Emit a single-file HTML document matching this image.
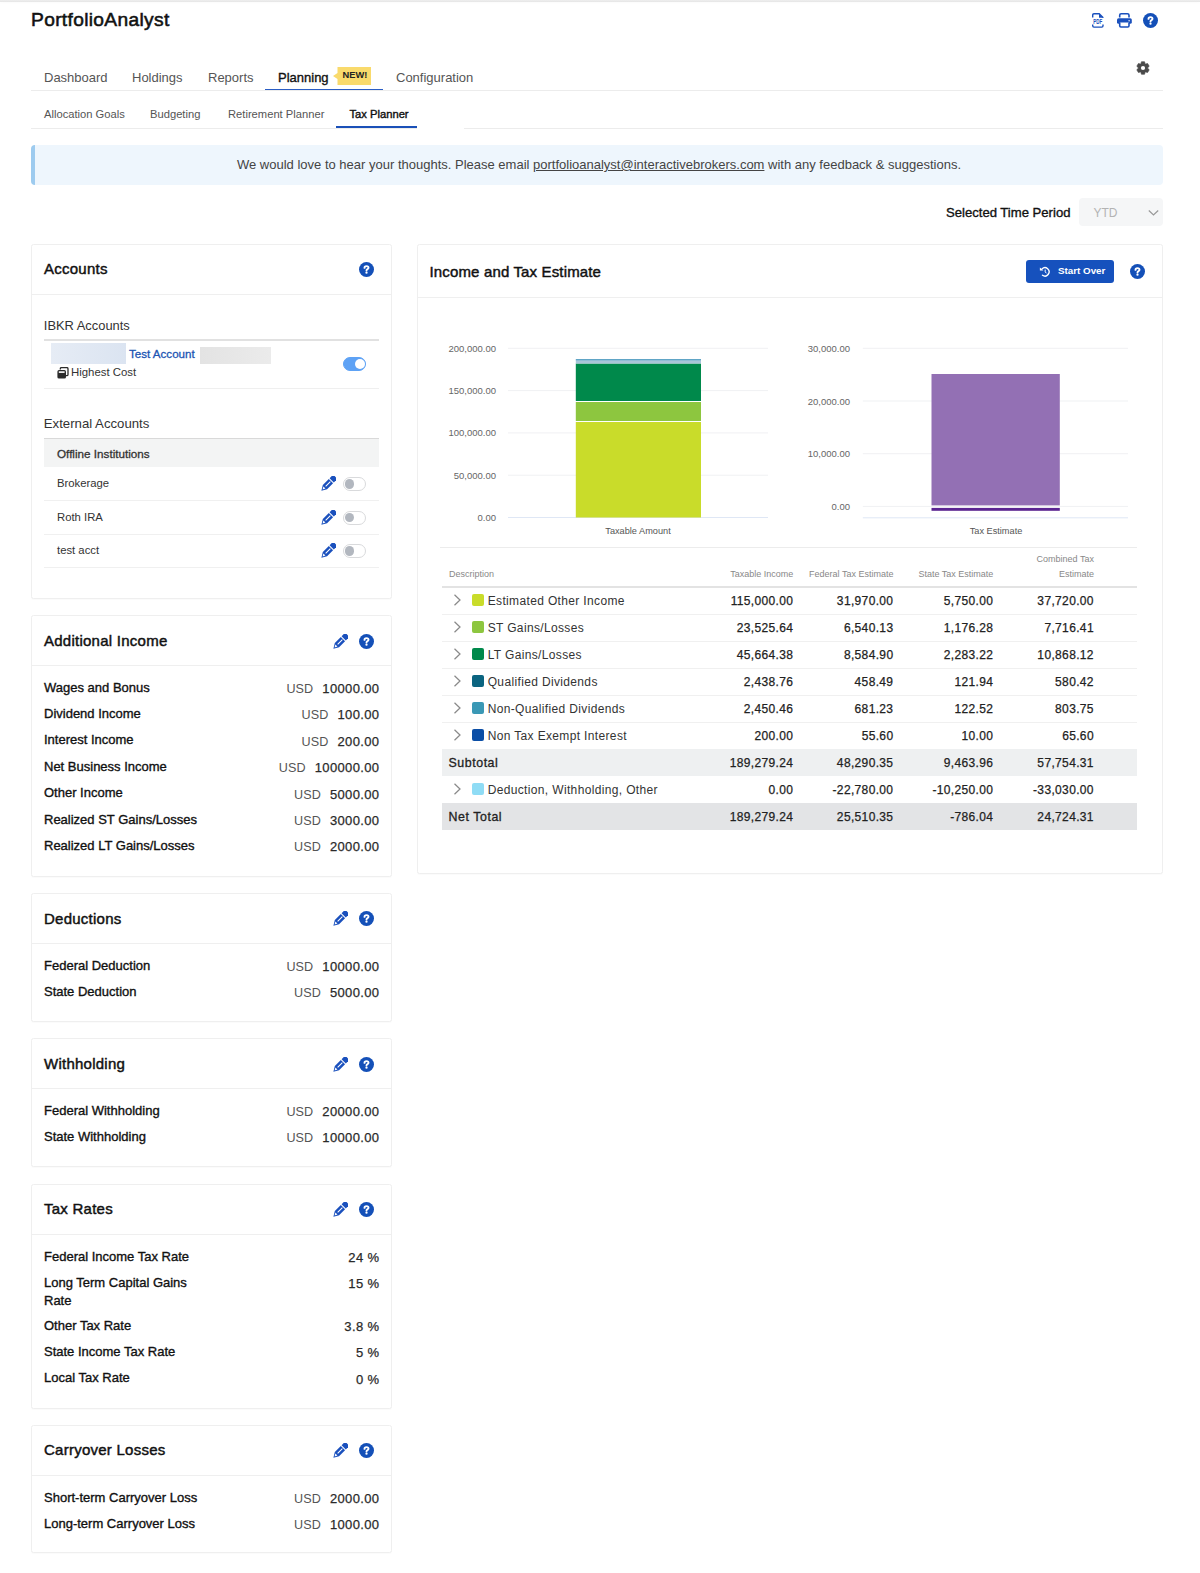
<!DOCTYPE html>
<html><head><meta charset="utf-8">
<style>
*{box-sizing:border-box;margin:0;padding:0}
html,body{width:1200px;height:1573px;overflow:hidden;background:#fff}
body{font-family:"Liberation Sans",sans-serif;color:#222;position:relative}
.abs{position:absolute}
.topbar{position:absolute;left:0;top:0;width:1200px;height:2px;background:linear-gradient(#efefef,#e5e5e5);box-shadow:0 1px 3px rgba(0,0,0,0.025)}
.logo{position:absolute;left:31px;top:9px;font-size:19.2px;font-weight:normal;color:#111;letter-spacing:0.33px;-webkit-text-stroke:0.55px #111}
.nav{position:absolute;left:31px;top:90px;width:1132px;height:1px;background:#ececec}
.navi{position:absolute;top:69.8px;font-size:13px;color:#555;white-space:nowrap}
.subnav{position:absolute;left:31px;top:128px;width:1132px;height:1px;background:#ececec}
.subi{position:absolute;top:108px;font-size:11.2px;color:#555;white-space:nowrap}
.banner{position:absolute;left:31px;top:145px;width:1132px;height:40px;background:#eef6fd;border-left:4px solid #9dcbef;border-radius:4px;font-size:13px;color:#444;text-align:center;line-height:40px}
.banner a{color:#444;text-decoration:underline}
.card{position:absolute;background:#fff;border:1px solid #efefef;border-radius:2.5px;box-shadow:0 1px 1px rgba(0,0,0,0.02)}
.ch{position:absolute;left:0;top:0;right:0;height:50px;border-bottom:1px solid #efefef}
.ct{position:absolute;left:12px;top:16px;font-size:15px;font-weight:normal;color:#111;letter-spacing:0.25px;-webkit-text-stroke:0.45px #111}
.help{position:absolute;width:15px;height:15px;border-radius:50%;background:#1450b8;color:#fff;font-size:10.5px;font-weight:bold;text-align:center;line-height:15.5px;-webkit-text-stroke:0.4px #fff}
.row{position:absolute;left:12px;right:12px;height:20px;font-size:12.3px}
.row .l{position:absolute;left:0;top:0;font-weight:normal;font-size:13px;color:#111;line-height:18px;margin-top:-2.5px;white-space:nowrap;-webkit-text-stroke:0.35px #111}
.row .r{position:absolute;right:0;top:0;color:#2a2a2a;font-size:13px;letter-spacing:0.35px;margin-right:-0.35px;-webkit-text-stroke:0.25px #2a2a2a;white-space:nowrap}
.row .r span{color:#555;margin-right:9px;letter-spacing:0.1px;-webkit-text-stroke:0;font-size:12.6px}
.tog{position:absolute;width:23px;height:14px;border-radius:7px;border:1px solid #d9dadc;background:#fff}
.tog::after{content:"";position:absolute;left:1.2px;top:1.3px;width:9.3px;height:9.3px;border-radius:50%;background:#b2b7bf}
.tog.on{background:#5ea2f5;border-color:#5ea2f5}
.tog.on::after{left:11px;top:1px;width:10px;height:10px;background:#fff}
.btn{position:absolute;width:88px;height:22.5px;background:#1651bd;border-radius:3px;color:#fff;font-size:9.8px;font-weight:bold}
.btn svg{position:absolute;left:13px;top:5.5px}
.btn span{position:absolute;left:32px;top:5px}
.ax{font-family:"Liberation Sans",sans-serif;font-size:9.5px;fill:#666}
.ax2{font-family:"Liberation Sans",sans-serif;font-size:9.2px;fill:#555}
.th{position:absolute;font-size:9px;color:#888;white-space:nowrap}
.td{position:absolute;font-size:12px;color:#333;white-space:nowrap;letter-spacing:0.35px}
.td.r{color:#222;-webkit-text-stroke:0.25px #222}
.r{text-align:right}
</style></head><body>
<div class="topbar"></div>
<div class="logo">PortfolioAnalyst</div>

<svg class="abs" style="left:1092px;top:13px" width="12" height="15" viewBox="0 0 12 15">
  <path d="M0.7 4.6 V2 Q0.7 0.7 2 0.7 H7.2 L11 4.5 V4.8" fill="none" stroke="#1a50bd" stroke-width="1.4"/>
  <path d="M7 0.5 L11.3 4.8 L7 4.8 Z" fill="#1a50bd"/>
  <path d="M0.7 11.6 V12.7 Q0.7 14.1 2 14.1 H9.8 Q11 14.1 11 12.7 V11.6" fill="none" stroke="#1a50bd" stroke-width="1.4"/>
  <text x="1.3" y="10.8" font-family="Liberation Sans" font-weight="bold" font-size="6.4" fill="#1a50bd" textLength="9" lengthAdjust="spacingAndGlyphs">PDF</text>
</svg>
<svg class="abs" style="left:1117px;top:13px" width="15" height="15" viewBox="0 0 15 15">
  <path d="M2.7 4.6 V2.3 Q2.7 0.8 4.2 0.8 H10.5 Q12 0.8 12 2.3 V4.6" fill="none" stroke="#1a50bd" stroke-width="1.6"/>
  <rect x="0" y="5.2" width="14.8" height="5.6" rx="1.6" fill="#1a50bd"/>
  <path d="M2.7 9.5 V12.8 Q2.7 14 3.9 14 H10.8 Q12 14 12 12.8 V9.5" fill="#fff" stroke="#1a50bd" stroke-width="1.6"/>
  <circle cx="12.1" cy="7.7" r="0.7" fill="#fff"/>
</svg>
<div class="help" style="left:1143px;top:13px"><svg width="15" height="15" viewBox="0 0 15 15" style="display:block"><path d="M5.5 5.9 Q5.5 4.1 7.5 4.1 Q9.5 4.1 9.5 5.7 Q9.5 6.6 8.5 7.1 Q7.5 7.6 7.5 8.5" fill="none" stroke="#fff" stroke-width="1.9" stroke-linecap="round"/><circle cx="7.5" cy="10.7" r="1.15" fill="#fff"/></svg></div>
<svg class="abs" style="left:1136.3px;top:61.2px" width="14" height="14" viewBox="-7 -7 14 14">
  <path d="M-2.04 -4.23 L-1.58 -6.20 L1.58 -6.20 L2.04 -4.23 L2.64 -3.89 L4.58 -4.47 L6.16 -1.73 L4.69 -0.35 L4.69 0.35 L6.16 1.73 L4.58 4.47 L2.64 3.89 L2.04 4.23 L1.58 6.20 L-1.58 6.20 L-2.04 4.23 L-2.64 3.89 L-4.58 4.47 L-6.16 1.73 L-4.69 0.35 L-4.69 -0.35 L-6.16 -1.73 L-4.58 -4.47 L-2.64 -3.89 Z" fill="#4a4a4a" stroke="#4a4a4a" stroke-width="0.7" stroke-linejoin="round"/><circle r="2.1" fill="#fff"/>
</svg>
<div class="abs" style="left:333px;top:66.7px;width:38px;height:18px">
  <svg width="38" height="18" viewBox="0 0 38 18" style="display:block"><path d="M4.5 0 H38 V18 H4.5 V12 L0 9 L4.5 6 Z" fill="#f9da6c"/></svg>
  <div class="abs" style="left:9.5px;top:3.3px;font-size:9.3px;font-weight:bold;color:#222">NEW!</div>
</div>
<svg class="abs" style="left:1148px;top:209px;z-index:3" width="11" height="8" viewBox="0 0 11 8"><path d="M0.8 1.5 L5.5 6 L10.2 1.5" fill="none" stroke="#999" stroke-width="1.2"/></svg>
<div class="nav"></div>
<div class="navi" style="left:44px">Dashboard</div>
<div class="navi" style="left:132px">Holdings</div>
<div class="navi" style="left:208px">Reports</div>
<div class="navi" style="left:278px;color:#111;font-size:13px;top:69.8px;-webkit-text-stroke:0.35px #111">Planning</div>
<div class="navi" style="left:396px">Configuration</div>
<div class="abs" style="left:265px;top:88.6px;width:118px;height:1.9px;background:#2a5dc4"></div>

<div class="subnav"></div><div class="abs" style="left:417px;top:127px;width:47px;height:3px;background:#fff"></div>
<div class="subi" style="left:44px">Allocation Goals</div>
<div class="subi" style="left:150px">Budgeting</div>
<div class="subi" style="left:228px">Retirement Planner</div>
<div class="subi" style="left:349.5px;color:#111;font-size:11.2px;-webkit-text-stroke:0.4px #111">Tax Planner</div>
<div class="abs" style="left:336px;top:126px;width:81px;height:2px;background:#1a50b8"></div>

<div class="banner">We would love to hear your thoughts. Please email <a>portfolioanalyst@interactivebrokers.com</a> with any feedback &amp; suggestions.</div>

<div class="abs" style="left:946px;top:205px;font-size:13.1px;color:#111;-webkit-text-stroke:0.35px #111">Selected Time Period</div>
<div class="abs" style="left:1079px;top:198px;width:84px;height:28px;background:#f5f6f7;border-radius:4px"></div>
<div class="abs" style="left:1093.5px;top:205.8px;font-size:12px;color:#b3b3b3">YTD</div>

<!-- Accounts card -->
<div class="card" style="left:31px;top:244px;width:361px;height:355px">
  <div class="ch"><div class="ct" style="top:15px">Accounts</div><div class="help" style="left:327px;top:17.3px"><svg width="15" height="15" viewBox="0 0 15 15" style="display:block"><path d="M5.5 5.9 Q5.5 4.1 7.5 4.1 Q9.5 4.1 9.5 5.7 Q9.5 6.6 8.5 7.1 Q7.5 7.6 7.5 8.5" fill="none" stroke="#fff" stroke-width="1.9" stroke-linecap="round"/><circle cx="7.5" cy="10.7" r="1.15" fill="#fff"/></svg></div></div>
  <div class="abs" style="left:11.8px;top:72.5px;font-size:12.9px;color:#333">IBKR Accounts</div>
  <div class="abs" style="left:12px;top:94px;width:335px;height:2px;background:#e1e1e1"></div>
  <div class="abs" style="left:19px;top:98px;width:75px;height:21px;background:linear-gradient(90deg,#e6ecf5,#dbe4f1);filter:blur(0.6px)"></div>
  <div class="abs" style="left:97px;top:101.8px;font-size:11.6px;color:#1c55b3;-webkit-text-stroke:0.3px #1c55b3">Test Account</div>
  <div class="abs" style="left:168px;top:102px;width:71px;height:17px;background:linear-gradient(90deg,#e3e3e3,#ebebeb);filter:blur(0.6px)"></div>
  <div class="abs" style="left:25px;top:122px;width:11px;height:11px"><svg width="12" height="12" viewBox="0 0 12 12" style="display:block"><path d="M3.3 2.6 V1.8 Q3.3 0.6 4.5 0.6 H9.8 Q11 0.6 11 1.8 V7.4 Q11 8.6 9.8 8.6 H9" fill="none" stroke="#2b2b2b" stroke-width="1.3"/><rect x="0.4" y="3.1" width="8.6" height="8.5" rx="1.6" fill="#2b2b2b"/><rect x="1.8" y="4.3" width="5.8" height="1.6" fill="#fff"/></svg></div>
  <div class="abs" style="left:39px;top:121.3px;font-size:11.4px;color:#333">Highest Cost</div>
  <div class="tog on" style="left:311px;top:112px"></div>
  <div class="abs" style="left:12px;top:143px;width:335px;height:1px;background:#efefef"></div>
  <div class="abs" style="left:11.8px;top:170.5px;font-size:13.2px;color:#333">External Accounts</div>
  <div class="abs" style="left:12px;top:193px;width:335px;height:1px;background:#d9d9d9"></div>
  <div class="abs" style="left:12px;top:194px;width:335px;height:28px;background:#f3f4f4"></div>
  <div class="abs" style="left:25px;top:201.5px;font-size:11.7px;color:#333;-webkit-text-stroke:0.3px #333">Offline Institutions</div>
  <div class="abs" style="left:25px;top:232.0px;font-size:11.3px;color:#333">Brokerage</div>
  <div class="abs" style="left:289px;top:231.0px;width:15px;height:15px"><svg width="15" height="15" viewBox="0 0 16 16" style="display:block"><path d="M0.40 15.60 L1.96 9.52 L8.32 3.15 L12.85 7.68 L6.48 14.04 Z" fill="#1a50bd"/><path d="M9.17 2.31 L12.00 -0.52 L13.98 -0.52 L16.52 2.02 L16.52 4.00 L13.69 6.83 Z" fill="#1a50bd"/><path d="M4.54 10.69 L9.63 5.59 L10.41 6.37 L5.31 11.46 Z" fill="#fff"/><path d="M1.67 14.33 L2.56 11.25 L4.75 13.44 Z" fill="#fff"/></svg></div>
  <div class="tog" style="left:311px;top:calc(233.0px - 1px)"></div>
  <div class="abs" style="left:12px;top:255.0px;width:335px;height:1px;background:#f0f0f0"></div>
  <div class="abs" style="left:25px;top:265.5px;font-size:11.3px;color:#333">Roth IRA</div>
  <div class="abs" style="left:289px;top:264.5px;width:15px;height:15px"><svg width="15" height="15" viewBox="0 0 16 16" style="display:block"><path d="M0.40 15.60 L1.96 9.52 L8.32 3.15 L12.85 7.68 L6.48 14.04 Z" fill="#1a50bd"/><path d="M9.17 2.31 L12.00 -0.52 L13.98 -0.52 L16.52 2.02 L16.52 4.00 L13.69 6.83 Z" fill="#1a50bd"/><path d="M4.54 10.69 L9.63 5.59 L10.41 6.37 L5.31 11.46 Z" fill="#fff"/><path d="M1.67 14.33 L2.56 11.25 L4.75 13.44 Z" fill="#fff"/></svg></div>
  <div class="tog" style="left:311px;top:calc(266.5px - 1px)"></div>
  <div class="abs" style="left:12px;top:288.5px;width:335px;height:1px;background:#f0f0f0"></div>
  <div class="abs" style="left:25px;top:299.0px;font-size:11.3px;color:#333">test acct</div>
  <div class="abs" style="left:289px;top:298.0px;width:15px;height:15px"><svg width="15" height="15" viewBox="0 0 16 16" style="display:block"><path d="M0.40 15.60 L1.96 9.52 L8.32 3.15 L12.85 7.68 L6.48 14.04 Z" fill="#1a50bd"/><path d="M9.17 2.31 L12.00 -0.52 L13.98 -0.52 L16.52 2.02 L16.52 4.00 L13.69 6.83 Z" fill="#1a50bd"/><path d="M4.54 10.69 L9.63 5.59 L10.41 6.37 L5.31 11.46 Z" fill="#fff"/><path d="M1.67 14.33 L2.56 11.25 L4.75 13.44 Z" fill="#fff"/></svg></div>
  <div class="tog" style="left:311px;top:calc(300.0px - 1px)"></div>
  <div class="abs" style="left:12px;top:322.0px;width:335px;height:1px;background:#f0f0f0"></div>
  
</div>
<div class="card" style="left:31px;top:615px;width:361px;height:262px">
  <div class="ch"><div class="ct">Additional Income</div><div class="abs" style="left:301px;top:18px;width:15px;height:15px"><svg width="15" height="15" viewBox="0 0 16 16" style="display:block"><path d="M0.40 15.60 L1.96 9.52 L8.32 3.15 L12.85 7.68 L6.48 14.04 Z" fill="#1a50bd"/><path d="M9.17 2.31 L12.00 -0.52 L13.98 -0.52 L16.52 2.02 L16.52 4.00 L13.69 6.83 Z" fill="#1a50bd"/><path d="M4.54 10.69 L9.63 5.59 L10.41 6.37 L5.31 11.46 Z" fill="#fff"/><path d="M1.67 14.33 L2.56 11.25 L4.75 13.44 Z" fill="#fff"/></svg></div><div class="help" style="left:327px;top:18px"><svg width="15" height="15" viewBox="0 0 15 15" style="display:block"><path d="M5.5 5.9 Q5.5 4.1 7.5 4.1 Q9.5 4.1 9.5 5.7 Q9.5 6.6 8.5 7.1 Q7.5 7.6 7.5 8.5" fill="none" stroke="#fff" stroke-width="1.9" stroke-linecap="round"/><circle cx="7.5" cy="10.7" r="1.15" fill="#fff"/></svg></div></div>
  <div class="row" style="top:65px"><div class="l">Wages and Bonus</div><div class="r"><span>USD</span>10000.00</div></div>
  <div class="row" style="top:91.4px"><div class="l">Dividend Income</div><div class="r"><span>USD</span>100.00</div></div>
  <div class="row" style="top:117.80000000000001px"><div class="l">Interest Income</div><div class="r"><span>USD</span>200.00</div></div>
  <div class="row" style="top:144.20000000000002px"><div class="l">Net Business Income</div><div class="r"><span>USD</span>100000.00</div></div>
  <div class="row" style="top:170.60000000000002px"><div class="l">Other Income</div><div class="r"><span>USD</span>5000.00</div></div>
  <div class="row" style="top:197.00000000000003px"><div class="l">Realized ST Gains/Losses</div><div class="r"><span>USD</span>3000.00</div></div>
  <div class="row" style="top:223.40000000000003px"><div class="l">Realized LT Gains/Losses</div><div class="r"><span>USD</span>2000.00</div></div>
</div>
<div class="card" style="left:31px;top:893px;width:361px;height:129px">
  <div class="ch"><div class="ct">Deductions</div><div class="abs" style="left:301px;top:17.2px;width:15px;height:15px"><svg width="15" height="15" viewBox="0 0 16 16" style="display:block"><path d="M0.40 15.60 L1.96 9.52 L8.32 3.15 L12.85 7.68 L6.48 14.04 Z" fill="#1a50bd"/><path d="M9.17 2.31 L12.00 -0.52 L13.98 -0.52 L16.52 2.02 L16.52 4.00 L13.69 6.83 Z" fill="#1a50bd"/><path d="M4.54 10.69 L9.63 5.59 L10.41 6.37 L5.31 11.46 Z" fill="#fff"/><path d="M1.67 14.33 L2.56 11.25 L4.75 13.44 Z" fill="#fff"/></svg></div><div class="help" style="left:327px;top:17.2px"><svg width="15" height="15" viewBox="0 0 15 15" style="display:block"><path d="M5.5 5.9 Q5.5 4.1 7.5 4.1 Q9.5 4.1 9.5 5.7 Q9.5 6.6 8.5 7.1 Q7.5 7.6 7.5 8.5" fill="none" stroke="#fff" stroke-width="1.9" stroke-linecap="round"/><circle cx="7.5" cy="10.7" r="1.15" fill="#fff"/></svg></div></div>
  <div class="row" style="top:65px"><div class="l">Federal Deduction</div><div class="r"><span>USD</span>10000.00</div></div>
  <div class="row" style="top:91.4px"><div class="l">State Deduction</div><div class="r"><span>USD</span>5000.00</div></div>
</div>
<div class="card" style="left:31px;top:1038px;width:361px;height:129px">
  <div class="ch"><div class="ct">Withholding</div><div class="abs" style="left:301px;top:18px;width:15px;height:15px"><svg width="15" height="15" viewBox="0 0 16 16" style="display:block"><path d="M0.40 15.60 L1.96 9.52 L8.32 3.15 L12.85 7.68 L6.48 14.04 Z" fill="#1a50bd"/><path d="M9.17 2.31 L12.00 -0.52 L13.98 -0.52 L16.52 2.02 L16.52 4.00 L13.69 6.83 Z" fill="#1a50bd"/><path d="M4.54 10.69 L9.63 5.59 L10.41 6.37 L5.31 11.46 Z" fill="#fff"/><path d="M1.67 14.33 L2.56 11.25 L4.75 13.44 Z" fill="#fff"/></svg></div><div class="help" style="left:327px;top:18px"><svg width="15" height="15" viewBox="0 0 15 15" style="display:block"><path d="M5.5 5.9 Q5.5 4.1 7.5 4.1 Q9.5 4.1 9.5 5.7 Q9.5 6.6 8.5 7.1 Q7.5 7.6 7.5 8.5" fill="none" stroke="#fff" stroke-width="1.9" stroke-linecap="round"/><circle cx="7.5" cy="10.7" r="1.15" fill="#fff"/></svg></div></div>
  <div class="row" style="top:65px"><div class="l">Federal Withholding</div><div class="r"><span>USD</span>20000.00</div></div>
  <div class="row" style="top:91.4px"><div class="l">State Withholding</div><div class="r"><span>USD</span>10000.00</div></div>
</div>
<div class="card" style="left:31px;top:1184px;width:361px;height:225px">
  <div class="ch"><div class="ct" style="top:15px">Tax Rates</div><div class="abs" style="left:301px;top:17.1px;width:15px;height:15px"><svg width="15" height="15" viewBox="0 0 16 16" style="display:block"><path d="M0.40 15.60 L1.96 9.52 L8.32 3.15 L12.85 7.68 L6.48 14.04 Z" fill="#1a50bd"/><path d="M9.17 2.31 L12.00 -0.52 L13.98 -0.52 L16.52 2.02 L16.52 4.00 L13.69 6.83 Z" fill="#1a50bd"/><path d="M4.54 10.69 L9.63 5.59 L10.41 6.37 L5.31 11.46 Z" fill="#fff"/><path d="M1.67 14.33 L2.56 11.25 L4.75 13.44 Z" fill="#fff"/></svg></div><div class="help" style="left:327px;top:17.1px"><svg width="15" height="15" viewBox="0 0 15 15" style="display:block"><path d="M5.5 5.9 Q5.5 4.1 7.5 4.1 Q9.5 4.1 9.5 5.7 Q9.5 6.6 8.5 7.1 Q7.5 7.6 7.5 8.5" fill="none" stroke="#fff" stroke-width="1.9" stroke-linecap="round"/><circle cx="7.5" cy="10.7" r="1.15" fill="#fff"/></svg></div></div>
  <div class="row" style="top:65px"><div class="l">Federal Income Tax Rate</div><div class="r">24 %</div></div>
  <div class="row" style="top:91.4px"><div class="l">Long Term Capital Gains<br>Rate</div><div class="r">15 %</div></div>
  <div class="row" style="top:134px"><div class="l">Other Tax Rate</div><div class="r">3.8 %</div></div>
  <div class="row" style="top:160.4px"><div class="l">State Income Tax Rate</div><div class="r">5 %</div></div>
  <div class="row" style="top:186.8px"><div class="l">Local Tax Rate</div><div class="r">0 %</div></div>
</div>
<div class="card" style="left:31px;top:1425px;width:361px;height:128px">
  <div class="ch"><div class="ct" style="top:15px">Carryover Losses</div><div class="abs" style="left:301px;top:17.1px;width:15px;height:15px"><svg width="15" height="15" viewBox="0 0 16 16" style="display:block"><path d="M0.40 15.60 L1.96 9.52 L8.32 3.15 L12.85 7.68 L6.48 14.04 Z" fill="#1a50bd"/><path d="M9.17 2.31 L12.00 -0.52 L13.98 -0.52 L16.52 2.02 L16.52 4.00 L13.69 6.83 Z" fill="#1a50bd"/><path d="M4.54 10.69 L9.63 5.59 L10.41 6.37 L5.31 11.46 Z" fill="#fff"/><path d="M1.67 14.33 L2.56 11.25 L4.75 13.44 Z" fill="#fff"/></svg></div><div class="help" style="left:327px;top:17.1px"><svg width="15" height="15" viewBox="0 0 15 15" style="display:block"><path d="M5.5 5.9 Q5.5 4.1 7.5 4.1 Q9.5 4.1 9.5 5.7 Q9.5 6.6 8.5 7.1 Q7.5 7.6 7.5 8.5" fill="none" stroke="#fff" stroke-width="1.9" stroke-linecap="round"/><circle cx="7.5" cy="10.7" r="1.15" fill="#fff"/></svg></div></div>
  <div class="row" style="top:65px"><div class="l">Short-term Carryover Loss</div><div class="r"><span>USD</span>2000.00</div></div>
  <div class="row" style="top:91.4px"><div class="l">Long-term Carryover Loss</div><div class="r"><span>USD</span>1000.00</div></div>
</div>
<!-- right card -->
<div class="card" style="left:417px;top:244px;width:746px;height:630px">
  <div class="ch" style="height:53px"><div class="ct" style="top:18px;left:11.5px;letter-spacing:0.15px">Income and Tax Estimate</div>
  <div class="btn" style="left:608px;top:15px"><svg width="12" height="12" viewBox="0 0 12 12"><path d="M3.0 3.0 A4.1 4.1 0 1 1 3.5 9.2" fill="none" stroke="#fff" stroke-width="1.35" stroke-linecap="round"/><path d="M0.9 1.6 L4.3 4.6 L0.9 4.6 Z" fill="#fff"/><path d="M6.2 3.6 V5.9 L7.5 7.3" fill="none" stroke="#fff" stroke-width="1"/></svg><span>Start Over</span></div>
  <div class="help" style="left:711.5px;top:18.5px"><svg width="15" height="15" viewBox="0 0 15 15" style="display:block"><path d="M5.5 5.9 Q5.5 4.1 7.5 4.1 Q9.5 4.1 9.5 5.7 Q9.5 6.6 8.5 7.1 Q7.5 7.6 7.5 8.5" fill="none" stroke="#fff" stroke-width="1.9" stroke-linecap="round"/><circle cx="7.5" cy="10.7" r="1.15" fill="#fff"/></svg></div></div>
  <svg class="abs" style="left:0;top:0" width="744" height="628">
    <text x="78" y="276.0" text-anchor="end" class="ax">0.00</text>
    <rect x="90" y="229.7" width="260" height="1" fill="#f0f1f3"/>
    <text x="78" y="233.7" text-anchor="end" class="ax">50,000.00</text>
    <rect x="90" y="187.4" width="260" height="1" fill="#f0f1f3"/>
    <text x="78" y="191.4" text-anchor="end" class="ax">100,000.00</text>
    <rect x="90" y="145.1" width="260" height="1" fill="#f0f1f3"/>
    <text x="78" y="149.1" text-anchor="end" class="ax">150,000.00</text>
    <rect x="90" y="102.8" width="260" height="1" fill="#f0f1f3"/>
    <text x="78" y="106.8" text-anchor="end" class="ax">200,000.00</text>
    <rect x="90" y="272.0" width="260" height="1" fill="#dfe7f5"/>
    <rect x="157.8" y="177" width="125.2" height="95.5" fill="#c9dc2a"/>
    <rect x="157.8" y="157" width="125.2" height="19" fill="#8dc63f"/>
    <rect x="157.8" y="118.5" width="125.2" height="37.5" fill="#00894b"/>
    <rect x="157.8" y="115.4" width="125.2" height="3.1" fill="#a9c6d9"/>
    <rect x="157.8" y="114.2" width="125.2" height="1.2" fill="#3a8fb8"/>
    <text x="220" y="289" text-anchor="middle" class="ax2">Taxable Amount</text>
    <rect x="444.8" y="260.9" width="265.20000000000005" height="1" fill="#f0f1f3"/>
    <text x="432" y="264.9" text-anchor="end" class="ax">0.00</text>
    <rect x="444.8" y="208.2" width="265.20000000000005" height="1" fill="#f0f1f3"/>
    <text x="432" y="212.2" text-anchor="end" class="ax">10,000.00</text>
    <rect x="444.8" y="155.5" width="265.20000000000005" height="1" fill="#f0f1f3"/>
    <text x="432" y="159.5" text-anchor="end" class="ax">20,000.00</text>
    <rect x="444.8" y="102.8" width="265.20000000000005" height="1" fill="#f0f1f3"/>
    <text x="432" y="106.8" text-anchor="end" class="ax">30,000.00</text>
    <rect x="444.8" y="272.3" width="265.20000000000005" height="1" fill="#dfe7f5"/>
    <rect x="513.5" y="129" width="128.3" height="131.4" fill="#9370b4"/>
    <rect x="513.5" y="262.9" width="128.3" height="2.9" fill="#5b2591"/>
    <text x="578" y="289" text-anchor="middle" class="ax2">Tax Estimate</text>
    <rect x="22" y="302" width="697" height="1" fill="#ececec"/>
  </svg>
  <div class="th" style="left:31px;top:324px">Description</div>
  <div class="th r" style="right:368.7px;top:324px">Taxable Income</div>
  <div class="th r" style="right:268.6px;top:324px">Federal Tax Estimate</div>
  <div class="th r" style="right:168.7px;top:324px">State Tax Estimate</div>
  <div class="th r" style="right:68.1px;top:324px">Estimate</div>
  <div class="th r" style="right:68.1px;top:309px">Combined Tax</div>
  <div class="abs" style="left:24px;top:340.5px;width:695px;height:2px;background:#e3e3e3"></div>
  <svg class="abs" style="left:35px;top:349px" width="9" height="12" viewBox="0 0 9 12"><path d="M1.5 0.8 L7 6 L1.5 11.2" fill="none" stroke="#8a8a8a" stroke-width="1.25"/></svg>
  <div class="abs" style="left:54.3px;top:349.3px;width:11.5px;height:11.5px;border-radius:2px;background:#c9dc2a"></div>
  <div class="td" style="left:69.7px;top:349px">Estimated Other Income</div>
  <div class="abs" style="left:24px;top:368.5px;width:695px;height:1px;background:#f0f0f0"></div>
  <div class="td r" style="right:368.7px;top:349px">115,000.00</div>
  <div class="td r" style="right:268.6px;top:349px">31,970.00</div>
  <div class="td r" style="right:168.7px;top:349px">5,750.00</div>
  <div class="td r" style="right:68.1px;top:349px">37,720.00</div>
  <svg class="abs" style="left:35px;top:376px" width="9" height="12" viewBox="0 0 9 12"><path d="M1.5 0.8 L7 6 L1.5 11.2" fill="none" stroke="#8a8a8a" stroke-width="1.25"/></svg>
  <div class="abs" style="left:54.3px;top:376.3px;width:11.5px;height:11.5px;border-radius:2px;background:#8dc63f"></div>
  <div class="td" style="left:69.7px;top:376px">ST Gains/Losses</div>
  <div class="abs" style="left:24px;top:395.5px;width:695px;height:1px;background:#f0f0f0"></div>
  <div class="td r" style="right:368.7px;top:376px">23,525.64</div>
  <div class="td r" style="right:268.6px;top:376px">6,540.13</div>
  <div class="td r" style="right:168.7px;top:376px">1,176.28</div>
  <div class="td r" style="right:68.1px;top:376px">7,716.41</div>
  <svg class="abs" style="left:35px;top:403px" width="9" height="12" viewBox="0 0 9 12"><path d="M1.5 0.8 L7 6 L1.5 11.2" fill="none" stroke="#8a8a8a" stroke-width="1.25"/></svg>
  <div class="abs" style="left:54.3px;top:403.3px;width:11.5px;height:11.5px;border-radius:2px;background:#00894b"></div>
  <div class="td" style="left:69.7px;top:403px">LT Gains/Losses</div>
  <div class="abs" style="left:24px;top:422.5px;width:695px;height:1px;background:#f0f0f0"></div>
  <div class="td r" style="right:368.7px;top:403px">45,664.38</div>
  <div class="td r" style="right:268.6px;top:403px">8,584.90</div>
  <div class="td r" style="right:168.7px;top:403px">2,283.22</div>
  <div class="td r" style="right:68.1px;top:403px">10,868.12</div>
  <svg class="abs" style="left:35px;top:430px" width="9" height="12" viewBox="0 0 9 12"><path d="M1.5 0.8 L7 6 L1.5 11.2" fill="none" stroke="#8a8a8a" stroke-width="1.25"/></svg>
  <div class="abs" style="left:54.3px;top:430.3px;width:11.5px;height:11.5px;border-radius:2px;background:#0b6480"></div>
  <div class="td" style="left:69.7px;top:430px">Qualified Dividends</div>
  <div class="abs" style="left:24px;top:449.5px;width:695px;height:1px;background:#f0f0f0"></div>
  <div class="td r" style="right:368.7px;top:430px">2,438.76</div>
  <div class="td r" style="right:268.6px;top:430px">458.49</div>
  <div class="td r" style="right:168.7px;top:430px">121.94</div>
  <div class="td r" style="right:68.1px;top:430px">580.42</div>
  <svg class="abs" style="left:35px;top:457px" width="9" height="12" viewBox="0 0 9 12"><path d="M1.5 0.8 L7 6 L1.5 11.2" fill="none" stroke="#8a8a8a" stroke-width="1.25"/></svg>
  <div class="abs" style="left:54.3px;top:457.3px;width:11.5px;height:11.5px;border-radius:2px;background:#3a98b5"></div>
  <div class="td" style="left:69.7px;top:457px">Non-Qualified Dividends</div>
  <div class="abs" style="left:24px;top:476.5px;width:695px;height:1px;background:#f0f0f0"></div>
  <div class="td r" style="right:368.7px;top:457px">2,450.46</div>
  <div class="td r" style="right:268.6px;top:457px">681.23</div>
  <div class="td r" style="right:168.7px;top:457px">122.52</div>
  <div class="td r" style="right:68.1px;top:457px">803.75</div>
  <svg class="abs" style="left:35px;top:484px" width="9" height="12" viewBox="0 0 9 12"><path d="M1.5 0.8 L7 6 L1.5 11.2" fill="none" stroke="#8a8a8a" stroke-width="1.25"/></svg>
  <div class="abs" style="left:54.3px;top:484.3px;width:11.5px;height:11.5px;border-radius:2px;background:#0b4ea6"></div>
  <div class="td" style="left:69.7px;top:484px">Non Tax Exempt Interest</div>
  <div class="td r" style="right:368.7px;top:484px">200.00</div>
  <div class="td r" style="right:268.6px;top:484px">55.60</div>
  <div class="td r" style="right:168.7px;top:484px">10.00</div>
  <div class="td r" style="right:68.1px;top:484px">65.60</div>
  <div class="abs" style="left:24px;top:504px;width:695px;height:27px;background:#eef0f1"></div>
  <div class="td" style="left:30.5px;top:511px;font-size:12.4px;letter-spacing:0.55px;color:#222;-webkit-text-stroke:0.3px #222">Subtotal</div>
  <div class="td r" style="right:368.7px;top:511px">189,279.24</div>
  <div class="td r" style="right:268.6px;top:511px">48,290.35</div>
  <div class="td r" style="right:168.7px;top:511px">9,463.96</div>
  <div class="td r" style="right:68.1px;top:511px">57,754.31</div>
  <svg class="abs" style="left:35px;top:538px" width="9" height="12" viewBox="0 0 9 12"><path d="M1.5 0.8 L7 6 L1.5 11.2" fill="none" stroke="#8a8a8a" stroke-width="1.25"/></svg>
  <div class="abs" style="left:54.3px;top:538.3px;width:11.5px;height:11.5px;border-radius:2px;background:#8fdcf5"></div>
  <div class="td" style="left:69.7px;top:538px">Deduction, Withholding, Other</div>
  <div class="td r" style="right:368.7px;top:538px">0.00</div>
  <div class="td r" style="right:268.6px;top:538px">-22,780.00</div>
  <div class="td r" style="right:168.7px;top:538px">-10,250.00</div>
  <div class="td r" style="right:68.1px;top:538px">-33,030.00</div>
  <div class="abs" style="left:24px;top:558px;width:695px;height:27px;background:#e3e4e6"></div>
  <div class="td" style="left:30.5px;top:565px;font-size:12.4px;letter-spacing:0.55px;color:#222;-webkit-text-stroke:0.3px #222">Net Total</div>
  <div class="td r" style="right:368.7px;top:565px">189,279.24</div>
  <div class="td r" style="right:268.6px;top:565px">25,510.35</div>
  <div class="td r" style="right:168.7px;top:565px">-786.04</div>
  <div class="td r" style="right:68.1px;top:565px">24,724.31</div>
</div>
</body></html>
